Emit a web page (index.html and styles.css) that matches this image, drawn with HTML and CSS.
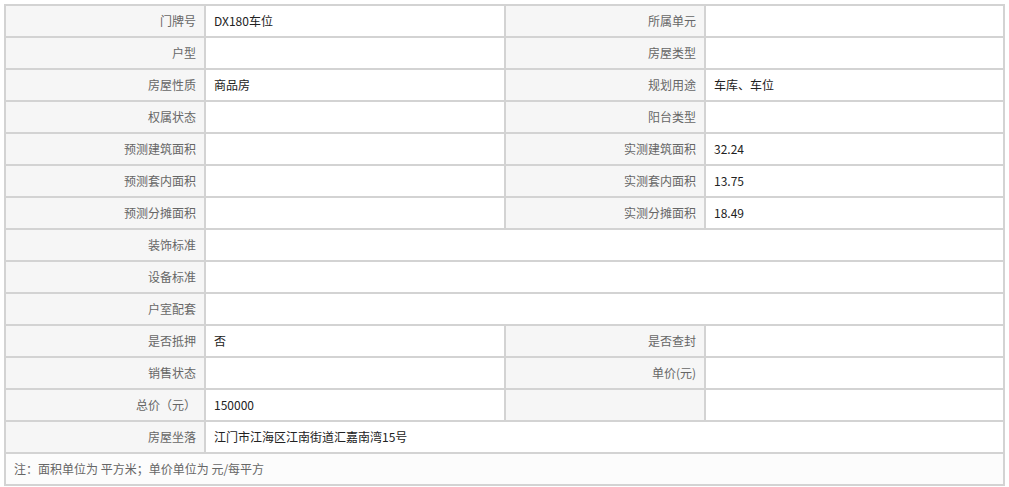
FILE: index.html
```html
<!DOCTYPE html>
<html lang="zh">
<head>
<meta charset="utf-8">
<link rel="stylesheet" href="styles.css">
</head>
<body>
<table class="info">
  <colgroup>
    <col class="c-label"><col class="c-value"><col class="c-label"><col class="c-value2">
  </colgroup>
  <tr><th>门牌号</th><td>DX180车位</td><th>所属单元</th><td></td></tr>
  <tr><th>户型</th><td></td><th>房屋类型</th><td></td></tr>
  <tr><th>房屋性质</th><td>商品房</td><th>规划用途</th><td>车库、车位</td></tr>
  <tr><th>权属状态</th><td></td><th>阳台类型</th><td></td></tr>
  <tr><th>预测建筑面积</th><td></td><th>实测建筑面积</th><td>32.24</td></tr>
  <tr><th>预测套内面积</th><td></td><th>实测套内面积</th><td>13.75</td></tr>
  <tr><th>预测分摊面积</th><td></td><th>实测分摊面积</th><td>18.49</td></tr>
  <tr><th>装饰标准</th><td colspan="3"></td></tr>
  <tr><th>设备标准</th><td colspan="3"></td></tr>
  <tr><th>户室配套</th><td colspan="3"></td></tr>
  <tr><th>是否抵押</th><td>否</td><th>是否查封</th><td></td></tr>
  <tr><th>销售状态</th><td></td><th>单价(元)</th><td></td></tr>
  <tr><th>总价（元）</th><td>150000</td><th></th><td></td></tr>
  <tr><th>房屋坐落</th><td colspan="3">江门市江海区江南街道汇嘉南湾15号</td></tr>
  <tr><td class="note" colspan="4">注：面积单位为 平方米；单价单位为 元/每平方</td></tr>
</table>
</body>
</html>
```
FILE: styles.css
```css
html, body {
  margin: 0;
  background: #ffffff;
}
body {
  padding: 4px;
  font-family: "Noto Sans CJK SC", "Noto Sans", sans-serif;
  font-size: 12px;
}
.info {
  border-collapse: collapse;
  table-layout: fixed;
  width: 999px;
}
.c-label { width: 200px; }
.c-value { width: 300px; }
.c-value2 { width: 299px; }
.info th, .info td {
  border: 2px solid #d3d3d3;
  height: 32px;
  padding: 0;
  box-sizing: border-box;
  line-height: 28px;
  font-weight: normal;
  vertical-align: middle;
}
.info th {
  background: #f6f6f6;
  color: #666666;
  text-align: right;
  padding-right: 8px;
}
.info td {
  background: #ffffff;
  color: #222222;
  text-align: left;
  padding-left: 8px;
}
.info td.note {
  background: #fcfcfc;
  color: #666666;
}
```
